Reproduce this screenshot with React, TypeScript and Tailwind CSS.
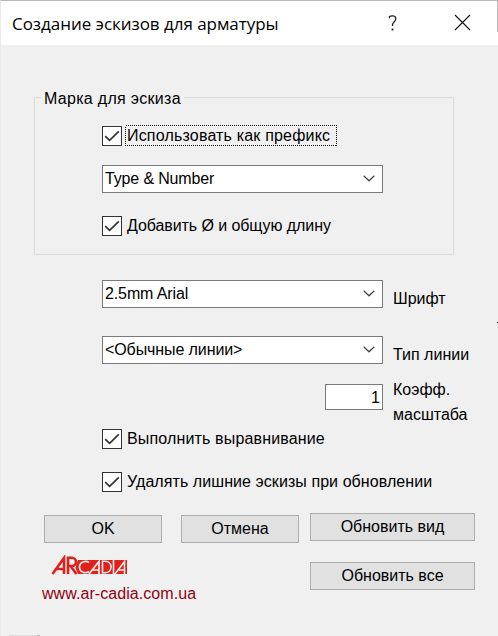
import type { ReactNode } from "react";

function Check({ children, focused = false, spacing = "" }: { children: ReactNode; focused?: boolean; spacing?: string }) {
  return (
    <label className="flex h-[21px] items-start">
      <span className="mt-px flex h-5 w-5 shrink-0 items-center justify-center border border-[#333] bg-white">
        <svg width="18" height="18" viewBox="0 0 18 18" fill="none" stroke="#333" strokeWidth="1.7">
          <path d="M2.2 9.2 L6.6 13.4 L15.8 4.4" />
        </svg>
      </span>
      <span className="relative ml-[3px] h-[21px] w-[212px] whitespace-nowrap pl-[2px] leading-[21px]">
        {focused && (
          <svg className="absolute left-0 top-0" width="212" height="21" fill="none">
            <rect x="0.5" y="0.5" width="211" height="20" stroke="#000" strokeDasharray="1 1" shapeRendering="crispEdges" />
          </svg>
        )}
        <span className={spacing}>{children}</span>
      </span>
    </label>
  );
}

function Combo({ children, spacing = "" }: { children: ReactNode; spacing?: string }) {
  return (
    <div className="flex h-7 w-[281px] shrink-0 items-center justify-between border border-[#7a7a7a] bg-white pl-[2px] pr-[7px]">
      <span className={`whitespace-nowrap leading-[26px] ${spacing}`}>{children}</span>
      <svg className="mt-[-1px]" width="12" height="7" viewBox="0 0 12 7" fill="none" stroke="#444" strokeWidth="1.2">
        <path d="M0.7 0.7 L6 5.8 L11.3 0.7" />
      </svg>
    </div>
  );
}

function Button({ children, className }: { children: ReactNode; className: string }) {
  return (
    <button className={`flex h-7 items-center justify-center whitespace-nowrap border border-[#adadad] bg-[#e1e1e1] pb-px ${className}`}>
      {children}
    </button>
  );
}

function Logo() {
  return (
    <svg className="block" width="78" height="20" viewBox="0 0 78 20" fill="none">
      <path d="M27 5H76V19H27L24.5 13Z" fill="#df211b" />
      <path d="M1.5 19 L13 3 V19 M5.5 14 H13" stroke="#df211b" strokeWidth="2.6" />
      <path d="M17 19 V2.8 H20.5 C26.5 2.8 26.5 11 20.5 11 H17 M19.5 11 L25.5 19" stroke="#df211b" strokeWidth="2.6" />
      <path d="M38 7.5 C34.5 5 28.5 7 28.5 12 C28.5 17.5 34.5 19 38 16.5" stroke="#f8eeee" strokeWidth="1.6" />
      <path d="M38 19 L48 6.5 V19 M42 15 H48" stroke="#f8eeee" strokeWidth="1.7" />
      <path d="M51.5 17.8 V6.2 H54 C62 6.2 62 17.8 54 17.8 Z" stroke="#f8eeee" strokeWidth="1.6" />
      <path d="M62.5 19 V5 M64 19 L73.5 6.5 V19 M68 15 H73.5" stroke="#f8eeee" strokeWidth="1.6" />
    </svg>
  );
}

function WindowEdges() {
  return (
    <svg className="pointer-events-none absolute -left-px -top-px" width="498" height="636" shapeRendering="crispEdges">
      <path fill="#e0e0e0" d="M0 1h1v200h-1z M9 635h29v1h-29z" />
      <path fill="#b8b8b8" d="M0 0h498v1h-498z M497 0h1v32h-1z M0 32h1v2h-1z M37 635h3v1h-3z" />
      <path fill="#c8c8c8" d="M0 172h1v30h-1z" />
      <path fill="#000" d="M0 151h1v1h-1z M0 178h1v2h-1z M0 182h1v2h-1z M497 322h1v1h-1z" />
    </svg>
  );
}

export default function App() {
  return (
    <main className="relative h-[636px] w-[498px] overflow-hidden border-l border-t border-l-[#ebebeb] border-t-[#b8b8b8] bg-[#f0f0f0] font-['Liberation_Sans',Arial,sans-serif] text-[16px] text-black">
      <header className="flex h-11 items-center bg-white pl-[11px]">
        <h1 className="w-[374px] whitespace-nowrap pt-[2px] font-['Open_Sans','Noto_Sans',sans-serif] text-[17px] leading-6 tracking-[-0.04px]">Создание эскизов для арматуры</h1>
        <svg className="mt-[-1px]" width="12" height="18" viewBox="0 0 12 18" fill="none" stroke="#222" strokeWidth="1.3">
          <path d="M3.5 4.2 V2.6 C5 1.5 9.8 1.1 9.8 4.8 C9.8 7.5 6.5 8 6.5 11 V12" />
          <path d="M6.5 14.5V16.5" strokeWidth="1.8" />
        </svg>
        <svg className="ml-[56px] mt-[-2px]" width="17" height="17" viewBox="0 0 17 17" stroke="#111" strokeWidth="1.1">
          <path d="M1 1 L16 16 M16 1 L1 16" />
        </svg>
      </header>

      <section className="ml-[33px] mt-[43px] h-[167px] w-[420px]">
        <div className="flex h-[18px] items-center">
          <span className="mt-px h-px w-[7px] bg-[#dcdcdc]" />
          <span className="w-[143px] whitespace-nowrap pl-[3px] pt-[3px] leading-[18px] tracking-[0.3px]">Марка для эскиза</span>
          <span className="mt-px h-px flex-1 bg-[#dcdcdc]" />
        </div>
        <div className="mt-[-8px] h-[157px] border-x border-b border-[#dcdcdc] pl-[67px] pt-[27px]">
          <Check focused spacing="tracking-[0.18px]">Использовать как префикс</Check>
          <div className="mt-[19px]"><Combo spacing="tracking-[-0.15px]">Type &amp; Number</Combo></div>
          <div className="mt-[22px]"><Check spacing="tracking-[-0.08px]">Добавить Ø и общую длину</Check></div>
        </div>
      </section>

      <section className="ml-[101px] mt-[25px]">
        <div className="flex h-7 gap-[10px]">
          <Combo spacing="tracking-[-0.12px]">2.5mm Arial</Combo>
          <span className="mt-[9px] leading-5">Шрифт</span>
        </div>
        <div className="mt-7 flex h-7 gap-[10px]">
          <Combo spacing="tracking-[-0.1px]">&lt;Обычные линии&gt;</Combo>
          <span className="mt-[9px] whitespace-nowrap leading-5">Тип линии</span>
        </div>
        <div className="mt-[13px] flex h-12 gap-[10px] pl-[223px]">
          <div className="mt-[7px] h-[26px] w-[58px] border border-[#7a7a7a] bg-white pr-[2px] text-right leading-[25px]">1</div>
          <div className="leading-[25px]">Коэфф.<br />масштаба</div>
        </div>
        <div className="mt-[3px]"><Check spacing="tracking-[0.15px]">Выполнить выравнивание</Check></div>
        <div className="mt-[22px]"><Check spacing="tracking-[0.07px]">Удалять лишние эскизы при обновлении</Check></div>
      </section>

      <footer className="ml-[43px] mt-[21px] flex">
        <div className="w-[266px]">
          <div className="mt-[2px] flex gap-[19px]">
            <Button className="w-[118px]">OK</Button>
            <Button className="w-[118px]">Отмена</Button>
          </div>
          <div className="ml-[7px] mt-[12px]"><Logo /></div>
          <div className="-ml-[2px] mt-[9px] leading-5 tracking-[0.06px] text-[#900010]">www.ar-cadia.com.ua</div>
        </div>
        <div className="flex flex-col gap-[21px]">
          <Button className="w-[165px]">Обновить вид</Button>
          <Button className="w-[165px]">Обновить все</Button>
        </div>
      </footer>
      <WindowEdges />
    </main>
  );
}
